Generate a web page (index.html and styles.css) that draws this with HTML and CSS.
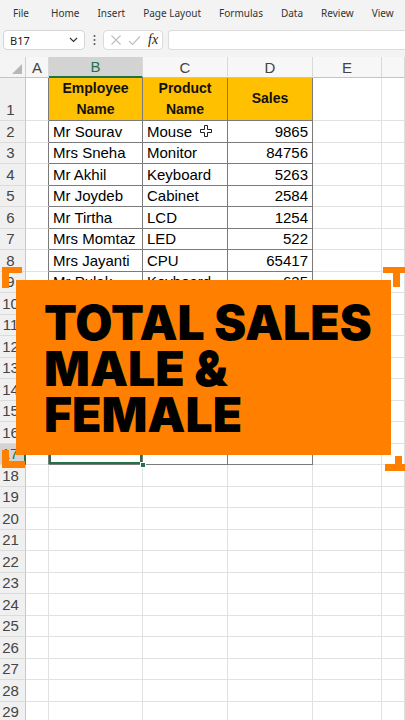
FILE: index.html
```html
<!DOCTYPE html>
<html>
<head>
<meta charset="utf-8">
<link rel="stylesheet" href="styles.css">
</head>
<body>
<div class="app">
  <div class="menubar">
    <span class="mi first">File</span><span class="mi">Home</span><span class="mi">Insert</span><span class="mi">Page Layout</span><span class="mi">Formulas</span><span class="mi">Data</span><span class="mi">Review</span><span class="mi">View</span>
  </div>
  <div class="fbar">
    <div class="namebox"><span>B17</span>
      <svg class="chev" width="9" height="6" viewBox="0 0 9 6"><path d="M1 1 L4.5 4.5 L8 1" fill="none" stroke="#333" stroke-width="1.2"/></svg>
    </div>
    <div class="dots">
      <svg width="3" height="12" viewBox="0 0 3 12"><circle cx="1.5" cy="2" r="1" fill="#555"/><circle cx="1.5" cy="6" r="1" fill="#555"/><circle cx="1.5" cy="10" r="1" fill="#555"/></svg>
    </div>
    <div class="fxbox">
      <svg width="12" height="12" viewBox="0 0 12 12"><path d="M1.5 1.5 L10.5 10.5 M10.5 1.5 L1.5 10.5" stroke="#bdbdbd" stroke-width="1.1" fill="none"/></svg>
      <svg width="13" height="11" viewBox="0 0 13 11"><path d="M1 6 L4.5 9.5 L12 1.5" stroke="#bdbdbd" stroke-width="1.1" fill="none"/></svg>
      <span class="fx">fx</span>
    </div>
    <div class="finput"></div>
  </div>

  <div class="sheet">
    <!-- column headers -->
    <div class="corner"><svg width="10" height="10" viewBox="0 0 10 10"><path d="M10 0 L10 10 L0 10 Z" fill="#b7b7b7"/></svg></div>
    <div class="h">A</div><div class="h sel">B</div><div class="h">C</div><div class="h">D</div><div class="h">E</div><div class="h"></div>

    <!-- row 1 -->
    <div class="rh">1</div><div class="c edge"></div>
    <div class="t y">Employee<br>Name</div><div class="t y">Product<br>Name</div><div class="t y">Sales</div>
    <div class="c"></div><div class="c"></div>

    <div class="rh">2</div><div class="c edge"></div><div class="t">Mr Sourav</div><div class="t">Mouse<svg class="cursor" width="12" height="12" viewBox="0 0 12 12"><path d="M4.5 0.5 H7.5 V4.5 H11.5 V7.5 H7.5 V11.5 H4.5 V7.5 H0.5 V4.5 H4.5 Z" fill="#fff" stroke="#222" stroke-width="1"/></svg></div><div class="t n">9865</div><div class="c"></div><div class="c"></div>
    <div class="rh">3</div><div class="c edge"></div><div class="t">Mrs Sneha</div><div class="t">Monitor</div><div class="t n">84756</div><div class="c"></div><div class="c"></div>
    <div class="rh">4</div><div class="c edge"></div><div class="t">Mr Akhil</div><div class="t">Keyboard</div><div class="t n">5263</div><div class="c"></div><div class="c"></div>
    <div class="rh">5</div><div class="c edge"></div><div class="t">Mr Joydeb</div><div class="t">Cabinet</div><div class="t n">2584</div><div class="c"></div><div class="c"></div>
    <div class="rh">6</div><div class="c edge"></div><div class="t">Mr Tirtha</div><div class="t">LCD</div><div class="t n">1254</div><div class="c"></div><div class="c"></div>
    <div class="rh">7</div><div class="c edge"></div><div class="t">Mrs Momtaz</div><div class="t">LED</div><div class="t n">522</div><div class="c"></div><div class="c"></div>
    <div class="rh">8</div><div class="c edge"></div><div class="t">Mrs Jayanti</div><div class="t">CPU</div><div class="t n">65417</div><div class="c"></div><div class="c"></div>
    <div class="rh">9</div><div class="c edge"></div><div class="t">Mr Pulak</div><div class="t">Keyboard</div><div class="t n">635</div><div class="c"></div><div class="c"></div>
    <div class="rh">10</div><div class="c edge"></div><div class="t"></div><div class="t"></div><div class="t n"></div><div class="c"></div><div class="c"></div>
    <div class="rh">11</div><div class="c edge"></div><div class="t"></div><div class="t"></div><div class="t n"></div><div class="c"></div><div class="c"></div>
    <div class="rh">12</div><div class="c edge"></div><div class="t"></div><div class="t"></div><div class="t n"></div><div class="c"></div><div class="c"></div>
    <div class="rh">13</div><div class="c edge"></div><div class="t"></div><div class="t"></div><div class="t n"></div><div class="c"></div><div class="c"></div>
    <div class="rh">14</div><div class="c edge"></div><div class="t"></div><div class="t"></div><div class="t n"></div><div class="c"></div><div class="c"></div>
    <div class="rh">15</div><div class="c edge"></div><div class="t"></div><div class="t"></div><div class="t n"></div><div class="c"></div><div class="c"></div>
    <div class="rh">16</div><div class="c edge"></div><div class="t"></div><div class="t"></div><div class="t n"></div><div class="c"></div><div class="c"></div>
    <div class="rh rsel">17</div><div class="c edge"></div><div class="t active"></div><div class="t"></div><div class="t n"></div><div class="c"></div><div class="c"></div>

    <div class="rh">18</div><div class="c"></div><div class="c"></div><div class="c"></div><div class="c"></div><div class="c"></div><div class="c"></div>
    <div class="rh">19</div><div class="c"></div><div class="c"></div><div class="c"></div><div class="c"></div><div class="c"></div><div class="c"></div>
    <div class="rh">20</div><div class="c"></div><div class="c"></div><div class="c"></div><div class="c"></div><div class="c"></div><div class="c"></div>
    <div class="rh">21</div><div class="c"></div><div class="c"></div><div class="c"></div><div class="c"></div><div class="c"></div><div class="c"></div>
    <div class="rh">22</div><div class="c"></div><div class="c"></div><div class="c"></div><div class="c"></div><div class="c"></div><div class="c"></div>
    <div class="rh">23</div><div class="c"></div><div class="c"></div><div class="c"></div><div class="c"></div><div class="c"></div><div class="c"></div>
    <div class="rh">24</div><div class="c"></div><div class="c"></div><div class="c"></div><div class="c"></div><div class="c"></div><div class="c"></div>
    <div class="rh">25</div><div class="c"></div><div class="c"></div><div class="c"></div><div class="c"></div><div class="c"></div><div class="c"></div>
    <div class="rh">26</div><div class="c"></div><div class="c"></div><div class="c"></div><div class="c"></div><div class="c"></div><div class="c"></div>
    <div class="rh">27</div><div class="c"></div><div class="c"></div><div class="c"></div><div class="c"></div><div class="c"></div><div class="c"></div>
    <div class="rh">28</div><div class="c"></div><div class="c"></div><div class="c"></div><div class="c"></div><div class="c"></div><div class="c"></div>
    <div class="rh">29</div><div class="c"></div><div class="c"></div><div class="c"></div><div class="c"></div><div class="c"></div><div class="c"></div>
  </div>

  <div class="banner">TOTAL SALES<br>MALE &amp;<br>FEMALE</div>
  <svg class="brackets" width="405" height="720" viewBox="0 0 405 720">
    <g fill="#ff8000">
      <rect x="2" y="267" width="20" height="6"/><rect x="2" y="267" width="7" height="21"/>
      <rect x="383" y="267" width="22" height="6"/><rect x="393" y="267" width="7" height="20"/>
      <rect x="2" y="450" width="7" height="18"/><rect x="2" y="461" width="23" height="7"/>
      <rect x="395" y="456" width="7" height="15"/><rect x="385" y="464" width="20" height="7"/>
    </g>
  </svg>
</div>
</body>
</html>
```
FILE: styles.css
```css
html, body {
  margin: 0;
  padding: 0;
  background: #fff;
}
body {
  width: 405px;
  height: 720px;
  overflow: hidden;
  font-family: "Liberation Sans", Arial, sans-serif;
}
.app {
  position: relative;
  width: 405px;
  height: 720px;
  overflow: hidden;
}
.menubar {
  height: 25px;
  background: #f3f3f3;
  display: flex;
  align-items: center;
  gap: 18px;
  padding-left: 13px;
  font-family: "Noto Sans", sans-serif;
  font-size: 10px;
  color: #333;
  box-sizing: border-box;
  white-space: nowrap;
  overflow: hidden;
}
.mi {
  flex-shrink: 0;
}
.mi.first {
  margin-right: 4px;
}
.fbar {
  height: 32px;
  background: #f3f3f3;
  display: flex;
  align-items: center;
  padding-left: 3px;
  box-sizing: border-box;
  padding-bottom: 2px;
}
.namebox {
  width: 82px;
  height: 20px;
  background: #fff;
  border: 1px solid #d6d6d6;
  border-radius: 4px;
  box-sizing: border-box;
  display: flex;
  align-items: center;
  justify-content: space-between;
  padding: 0 6px 0 6px;
  font-family: "Noto Sans", sans-serif;
  font-size: 11px;
  color: #222;
}
.dots {
  width: 18px;
  display: flex;
  justify-content: center;
  align-items: center;
}
.fxbox {
  width: 60px;
  height: 20px;
  background: #fff;
  border: 1px solid #dcdcdc;
  border-radius: 4px;
  box-sizing: border-box;
  display: flex;
  align-items: center;
  gap: 6px;
  padding-left: 6px;
}
.fx {
  font-family: "Liberation Serif", serif;
  font-style: italic;
  font-size: 14px;
  color: #222;
  margin-left: 1px;
}
.finput {
  flex: 1;
  height: 20px;
  margin-left: 5px;
  background: #fff;
  border: 1px solid #dcdcdc;
  border-right: none;
  border-radius: 4px 0 0 4px;
  box-sizing: border-box;
}
.sheet {
  display: grid;
  grid-template-columns: 26px 23px 94px 85px 85px 69px 1fr;
  grid-template-rows: 21px 43px repeat(28, 21.5px);
  font-size: 15px;
  color: #000;
}
.sheet > div {
  box-sizing: border-box;
  display: flex;
  align-items: center;
  overflow: hidden;
  white-space: nowrap;
}
.corner {
  background: #f5f5f5;
  border-right: 1px solid #cfcfcf;
  border-bottom: 1px solid #c4c4c4;
  justify-content: flex-end;
  align-items: flex-end !important;
  padding: 0 3px 3px 0;
}
.h {
  background: #f7f7f7;
  border-right: 1px solid #d9d9d9;
  border-bottom: 1px solid #c4c4c4;
  justify-content: center;
  color: #444;
}
.h.sel {
  background: #d3d3d3;
  color: #217346;
  border-bottom: 2px solid #217346;
}
.rh {
  background: #f0f0f0;
  border-right: 1px solid #c8c8c8;
  border-bottom: 1px solid #dcdcdc;
  justify-content: center;
  align-items: flex-end !important;
  padding: 0 4px 2px 0;
  color: #444;
  overflow: visible !important;
}
.rh.rsel {
  background: #d3d3d3;
  color: #217346;
  border-right: 2px solid #217346;
}
.c {
  border-right: 1px solid #e1e1e1;
  border-bottom: 1px solid #e1e1e1;
}
.c.edge {
  border-right: 1px solid #7a7a7a;
}
.t {
  border-right: 1px solid #7a7a7a;
  border-bottom: 1px solid #7a7a7a;
  padding: 0 4px;
}
.t.n {
  justify-content: flex-end;
}
.t.y {
  background: #ffc000;
  font-weight: bold;
  font-size: 14px;
  justify-content: center;
  text-align: center;
  line-height: 21.5px;
  color: #111;
}
.cursor {
  margin-left: 8px;
}
.t.active {
  position: relative;
  overflow: visible !important;
  box-shadow: inset 0 0 0 2px #217346;
}
.t.active::after {
  content: "";
  position: absolute;
  right: -4px;
  bottom: -4px;
  width: 6px;
  height: 6px;
  background: #217346;
  border: 1px solid #fff;
  box-sizing: border-box;
}
.banner {
  position: absolute;
  left: 16px;
  top: 280px;
  width: 375px;
  height: 175px;
  background: #ff8000;
  box-sizing: border-box;
  padding: 20px 0 0 28px;
  font-family: "Inter", "DejaVu Sans", sans-serif;
  font-weight: 900;
  font-size: 48px;
  line-height: 46px;
  color: #000;
  white-space: nowrap;
}
.brackets {
  position: absolute;
  left: 0;
  top: 0;
  pointer-events: none;
}
```
